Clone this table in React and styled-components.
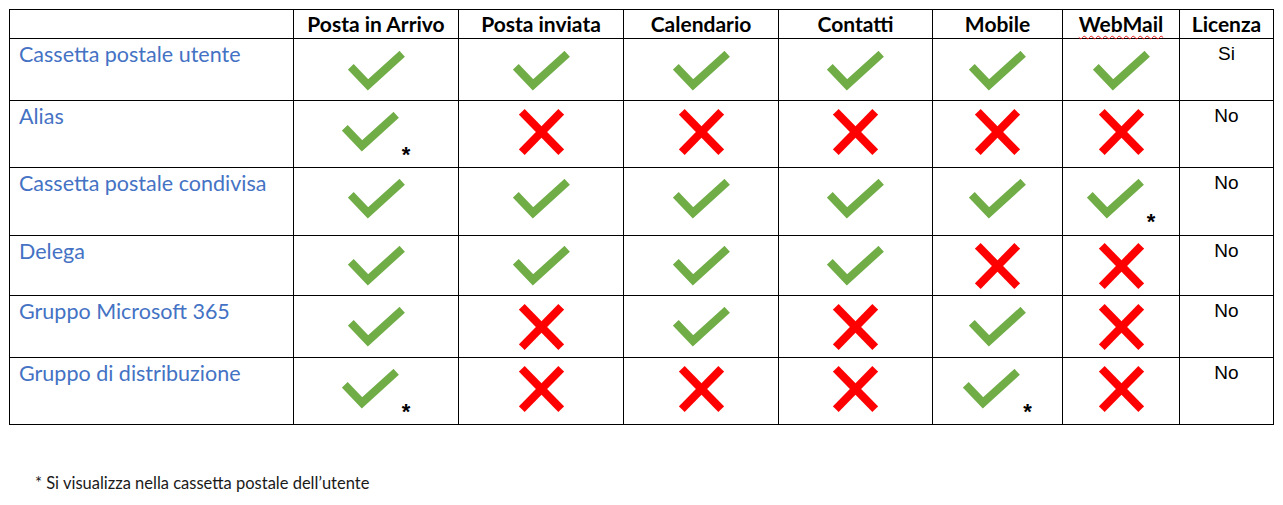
import React from "react";
import styled, { createGlobalStyle } from "styled-components";

const Global = createGlobalStyle`
  html, body { margin: 0; padding: 0; background: #ffffff; }
  body { font-family: "Lato", "Liberation Sans", sans-serif; }
`;

const Page = styled.div`
  width: 1283px;
  height: 505px;
  padding: 9px 0 0 9px;
  box-sizing: border-box;
  display: flex;
  flex-direction: column;
`;

const Table = styled.table`
  border-collapse: collapse;
  table-layout: fixed;
  width: 1265px;
`;

const Row = styled.tr`
  height: ${(p) => p.$h}px;
`;

const HeadCell = styled.th`
  border: 1px solid #000;
  padding: 0;
  height: 28px;
  font-family: "Lato", sans-serif;
  font-weight: 700;
  font-size: 21px;
  line-height: 28px;
  color: #000;
  text-align: center;
  vertical-align: top;
  white-space: nowrap;
`;

const Spell = styled.span`
  text-decoration: underline wavy #e81c1c;
  text-decoration-thickness: 1.3px;
  text-underline-offset: 3px;
`;

const LabelCell = styled.td`
  border: 1px solid #000;
  padding: 2px 0 0 9px;
  vertical-align: top;
  font-family: "Lato", sans-serif;
  font-size: 21.5px;
  line-height: 26px;
  color: #4472c4;
  white-space: nowrap;
`;

const MarkCell = styled.td`
  border: 1px solid #000;
  padding: ${(p) => p.$top}px 0 0 0;
  vertical-align: top;
`;

const Mark = styled.div`
  height: 50px;
  display: flex;
  align-items: center;
  justify-content: center;
`;

const Group = styled.div`
  display: flex;
  align-items: flex-end;
`;

const Star = styled.span`
  font-family: "Liberation Sans", sans-serif;
  font-weight: 700;
  font-size: 22px;
  line-height: 22px;
  height: 22px;
  margin-left: 3px;
  margin-bottom: -14px;
  color: #000;
`;

const LicCell = styled.td`
  border: 1px solid #000;
  padding: 3px 0 0 0;
  vertical-align: top;
  text-align: center;
  font-family: "Liberation Sans", sans-serif;
  font-size: 19px;
  line-height: 24px;
  color: #000;
`;

const Footnote = styled.p`
  margin: 48px 0 0 26px;
  font-family: "Lato", sans-serif;
  font-size: 16.5px;
  line-height: 20px;
  color: #1a1a1a;
`;

const Check = () => (
  <svg width="57" height="40" viewBox="0 0 57 40">
    <polyline
      points="2.8,15.8 20,33.8 54.2,2.8"
      fill="none"
      stroke="#70ad47"
      strokeWidth="8"
      strokeLinejoin="miter"
      strokeMiterlimit="10"
    />
  </svg>
);

const Cross = () => (
  <svg width="45" height="46" viewBox="0 0 45 46">
    <g stroke="#ff0000" strokeWidth="8" fill="none">
      <line x1="2.8" y1="2.8" x2="42.2" y2="43.2" />
      <line x1="42.2" y1="2.8" x2="2.8" y2="43.2" />
    </g>
  </svg>
);

const cols = [284, 165, 165, 155, 154, 130, 117, 94];
const headers = ["", "Posta in Arrivo", "Posta inviata", "Calendario", "Contatti", "Mobile", "WebMail", "Licenza"];

const rows = [
  { label: "Cassetta postale utente", h: 62, top: 7, marks: ["y", "y", "y", "y", "y", "y"], lic: "Si" },
  { label: "Alias", h: 67, top: 6, marks: ["y*", "n", "n", "n", "n", "n"], lic: "No" },
  { label: "Cassetta postale condivisa", h: 68, top: 6, marks: ["y", "y", "y", "y", "y", "y*"], lic: "No" },
  { label: "Delega", h: 60, top: 5, marks: ["y", "y", "y", "y", "n", "n"], lic: "No" },
  { label: "Gruppo Microsoft 365", h: 62, top: 6, marks: ["y", "n", "y", "n", "y", "n"], lic: "No" },
  { label: "Gruppo di distribuzione", h: 67, top: 6, marks: ["y*", "n", "n", "n", "y*", "n"], lic: "No" },
];

const renderMark = (m) => {
  if (m === "n") return <Cross />;
  if (m === "y*")
    return (
      <Group>
        <Check />
        <Star>*</Star>
      </Group>
    );
  return <Check />;
};

export default function App() {
  return (
    <>
      <Global />
      <Page>
        <Table>
          <colgroup>
            {cols.map((w, i) => (
              <col key={i} style={{ width: w }} />
            ))}
          </colgroup>
          <thead>
            <Row $h={28}>
              {headers.map((h, i) => (
                <HeadCell key={i}>{h === "WebMail" ? <Spell>WebMail</Spell> : h}</HeadCell>
              ))}
            </Row>
          </thead>
          <tbody>
            {rows.map((r, ri) => (
              <Row key={ri} $h={r.h}>
                <LabelCell>{r.label}</LabelCell>
                {r.marks.map((m, mi) => (
                  <MarkCell key={mi} $top={r.top}>
                    <Mark>{renderMark(m)}</Mark>
                  </MarkCell>
                ))}
                <LicCell>{r.lic}</LicCell>
              </Row>
            ))}
          </tbody>
        </Table>
        <Footnote>* Si visualizza nella cassetta postale dell’utente</Footnote>
      </Page>
    </>
  );
}
